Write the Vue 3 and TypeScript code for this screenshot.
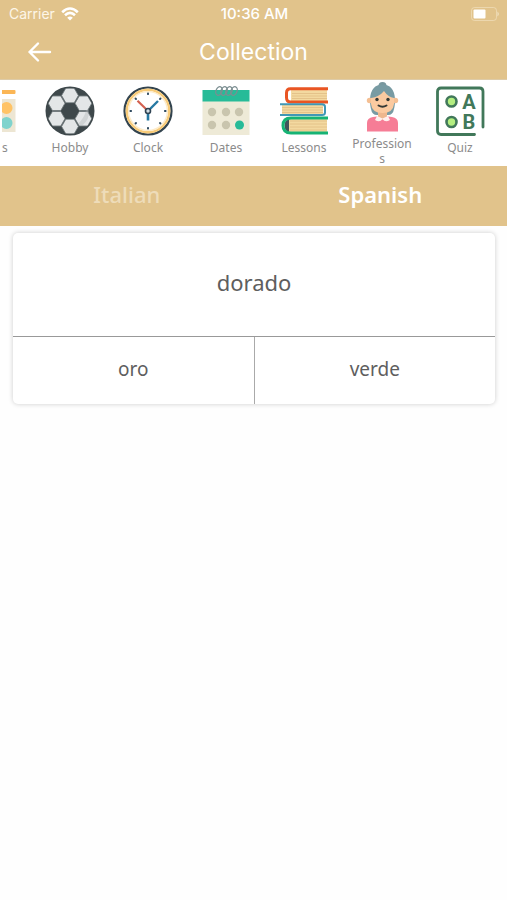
<script setup lang="ts">
import { ref } from 'vue'

interface Category {
  id: string
  label: string
}

const categories: Category[] = [
  { id: 'hobby', label: 'Hobby' },
  { id: 'clock', label: 'Clock' },
  { id: 'dates', label: 'Dates' },
  { id: 'lessons', label: 'Lessons' },
  { id: 'professions', label: 'Professions' },
  { id: 'quiz', label: 'Quiz' },
]

const languages: string[] = ['Italian', 'Spanish']
const activeLanguage = ref<string>('Spanish')

const word = 'dorado'
const answers: string[] = ['oro', 'verde']

const panels = [0, 60, 120, 180, 240, 300]
const hours = [0, 45, 90, 135, 180, 225, 270, 315]
const dots = [
  [11, 26], [25, 26], [38, 26],
  [11, 39], [25, 39],
]
</script>

<template>
  <div class="screen">
    <header class="top">
      <div class="status">
        <div class="carrier">
          <span>Carrier</span>
          <svg width="18" height="14" viewBox="0 0 18 14" fill="none" stroke="#fff" stroke-width="2.6">
            <path d="M1.2 5.2Q9-2.2 16.8 5.2" />
            <path d="M4 8.2Q9 3.6 14 8.2" />
            <path d="M9 13.6L6.2 10.8Q9 8.4 11.8 10.8Z" fill="#fff" stroke="none" />
          </svg>
        </div>
        <span class="time">10:36 AM</span>
        <svg class="battery" width="30" height="14" viewBox="0 0 30 14">
          <rect x="1.5" y=".5" width="25" height="13" rx="3" fill="none" stroke="#f3e4c6" stroke-opacity=".6" />
          <rect x="3.5" y="2.5" width="12" height="9" rx="1" fill="#fff" />
          <path d="M27.5 4.5Q30 7 27.5 9.5Z" fill="#f3e4c6" />
        </svg>
      </div>
      <div class="nav">
        <button class="back" type="button" aria-label="Back">
          <svg width="26" height="22" viewBox="0 0 26 22" fill="none" stroke="#fff" stroke-width="2.4" stroke-linecap="round" stroke-linejoin="round">
            <path d="M24 11H3.5M12 2.5L3.5 11L12 19.5" />
          </svg>
        </button>
        <h1>Collection</h1>
      </div>
    </header>

    <nav class="strip">
      <a class="item partial" href="#">
        <svg width="14" height="50" viewBox="0 0 14 50">
          <rect x="-4" y="4" width="17.5" height="4" rx="1" fill="#fbb655" />
          <rect x="-4" y="13" width="17.5" height="33" fill="#ede6d3" />
          <circle cx="4.5" cy="22" r="6" fill="#ffc366" />
          <circle cx="4.5" cy="37" r="6" fill="#80d3cd" />
        </svg>
        <span class="label">s</span>
      </a>
      <a v-for="c in categories" :key="c.id" class="item" href="#">
        <svg v-if="c.id === 'hobby'" width="50" height="50" viewBox="0 0 50 50">
          <defs>
            <clipPath id="ball"><circle cx="25" cy="25" r="23" /></clipPath>
          </defs>
          <circle cx="25" cy="25" r="24.5" fill="#3e484b" />
          <g clip-path="url(#ball)">
            <path
              v-for="a in panels"
              :key="a"
              d="M20.8 2.2H29.2L33.4 9.5L29.2 16.8H20.8L16.6 9.5Z"
              :transform="`rotate(${a} 25 25)`"
              fill="#e3e6e7"
              stroke="#6f787b"
              stroke-width=".8"
            />
            <path d="M44 24Q45 33 37 40L33 38Q40 31 41 24Z" fill="#a9b0b2" opacity=".35" />
          </g>
          <path d="M20.8 17.5H29.2L33.4 25L29.2 32.5H20.8L16.6 25Z" fill="#3e484b" />
        </svg>

        <svg v-else-if="c.id === 'clock'" width="50" height="50" viewBox="0 0 50 50">
          <circle cx="25" cy="25" r="23.5" fill="#fff" stroke="#33444f" stroke-width="2.2" />
          <circle cx="25" cy="25" r="21.2" fill="#fff" stroke="#f8cb78" stroke-width="2.4" />
          <circle cx="25" cy="25" r="19.4" fill="none" stroke="#fdebc9" stroke-width="1.4" />
          <g v-for="h in hours" :key="h" :transform="`rotate(${h} 25 25)`">
            <rect x="24" y="6.5" width="2" height="2.5" rx=".8" fill="#2f4a5f" />
          </g>
          <path d="M24 24L14.5 14.8" stroke="#d3604f" stroke-width="2.2" />
          <path d="M26 24L35 15" stroke="#2679a3" stroke-width="2.4" />
          <path d="M25 26V34.5" stroke="#2679a3" stroke-width="2.6" />
          <circle cx="25" cy="25" r="2.5" fill="#d5dfe4" stroke="#2f4352" stroke-width="1.6" />
        </svg>

        <svg v-else-if="c.id === 'dates'" width="50" height="50" viewBox="0 0 50 50">
          <rect x="1.5" y="15" width="47" height="34" fill="#eeead7" />
          <rect x="1.5" y="4" width="47" height="11.500" fill="#27bb98" />
          <g fill="none" stroke="#7b8e91" stroke-width="1.3">
            <ellipse v-for="x in [18, 23, 28, 33]" :key="x" :cx="x" cy="5" rx="3" ry="4.5" :transform="`rotate(22 ${x} 5)`" />
          </g>
          <circle v-for="(d, i) in dots" :key="i" :cx="d[0]" :cy="d[1]" r="4.2" fill="#c9c5ae" />
          <circle cx="38.5" cy="39" r="4.5" fill="#27bb98" />
        </svg>

        <svg v-else-if="c.id === 'lessons'" width="50" height="50" viewBox="0 0 50 50">
          <path d="M12 4H48V15H12Z" fill="#f3d9a0" />
          <path d="M13 7.5H48M13 10H48M13 12.5H48" stroke="#dfbd83" stroke-width=".8" />
          <path d="M49 2.7H11.5Q7.5 2.7 7.5 7V11.5Q7.5 16 11.5 16H49" fill="none" stroke="#e95523" stroke-width="3" />
          <path d="M3 19H44V28.5H3Z" fill="#f3d9a0" />
          <path d="M3 21.5H44M3 24H44M3 26.5H44" stroke="#dfbd83" stroke-width=".8" />
          <path d="M1 18.3H43Q46 18.3 46 21V26.5Q46 29 43 29H1" fill="none" stroke="#4197b5" stroke-width="2" />
          <path d="M10 32H48V46H10Z" fill="#f3d9a0" />
          <path d="M11 35H48M11 38H48M11 41H48M11 44H48" stroke="#dfbd83" stroke-width=".8" />
          <path d="M10 33Q5.5 34 5.5 39.5Q5.5 45 10 46Z" fill="#41545b" />
          <path d="M49 32H12Q4 32 4 39.5Q4 47 12 47H49" fill="none" stroke="#16b374" stroke-width="3" />
        </svg>

        <svg v-else-if="c.id === 'professions'" width="50" height="50" viewBox="0 0 50 50">
          <circle cx="25.5" cy="4" r="4" fill="#78979e" />
          <path d="M14 27Q13 24 13 17Q14 2.500 25.5 2.500Q37 2.500 38 17Q38 24 37 27Q36 33 31 33H20Q15 33 14 27Z" fill="#789ba3" />
          <path d="M21 29H30V36Q25.5 42 21 36Z" fill="#eeb78e" />
          <circle cx="12.500" cy="18.5" r="2.7" fill="#f4bf93" />
          <circle cx="38.500" cy="18.5" r="2.7" fill="#f4bf93" />
          <path d="M14 16Q22 15 27 9Q31 15 37 16V22Q36 31 25.5 31Q15 31 14 22Z" fill="#fbcaa0" />
          <circle cx="20" cy="17.5" r="1.7" fill="#343936" />
          <circle cx="31" cy="17.5" r="1.7" fill="#343936" />
          <path d="M21.500 23.5Q25.500 26 29.500 23.500" fill="none" stroke="#343936" stroke-width="2" stroke-linecap="round" />
          <path d="M10 49.500V41Q10 36 16 35L20 34.500L25.500 38L31 34.500L35 35Q41 36 41 41V49.500Z" fill="#f67d96" />
          <path d="M20 34L25.5 36.500L31 34L33 38Q28 41 25.5 37Q23 41 18 38Z" fill="#fff0ee" />
        </svg>

        <svg v-else width="50" height="50" viewBox="0 0 50 50">
          <path d="M39.500 48.500H6Q2.500 48.500 2.500 45V5.500Q2.500 2 6 2H44.500Q48 2 48 5.500V41" fill="none" stroke="#41785a" stroke-width="2.8" stroke-linecap="round" />
          <circle cx="16.5" cy="15.5" r="5" fill="#b3ee80" stroke="#41785a" stroke-width="2.6" />
          <circle cx="16.5" cy="36" r="5" fill="#b3ee80" stroke="#41785a" stroke-width="2.6" />
          <text x="34" y="22.5" class="letter">A</text>
          <text x="34" y="43" class="letter">B</text>
        </svg>
        <span class="label">{{ c.label }}</span>
      </a>
    </nav>

    <div class="tabs">
      <button
        v-for="l in languages"
        :key="l"
        type="button"
        :class="['tab', { active: l === activeLanguage }]"
        @click="activeLanguage = l"
      >
        {{ l }}
      </button>
    </div>

    <main class="card">
      <p class="word">{{ word }}</p>
      <div class="answers">
        <button v-for="a in answers" :key="a" type="button" class="answer">{{ a }}</button>
      </div>
    </main>
  </div>
</template>

<style>
body {
  background: #fefefe;
}
</style>

<style scoped>
.screen {
  font-family: "Noto Sans", sans-serif;
  color: #5e5e5e;
}
button {
  margin: 0;
  padding: 0;
  border: 0;
  background: none;
  font: inherit;
  color: inherit;
  cursor: pointer;
}
svg {
  display: block;
  flex: none;
}
.top {
  background: #e1c38b;
  color: #fff;
  font-family: Inter, sans-serif;
  border-bottom: 1px solid #ddcba8;
}
.status {
  display: grid;
  grid-template-columns: 1fr auto 1fr;
  align-items: center;
  height: 27px;
  padding: 0 7px 0 9px;
  font-size: 14px;
}
.carrier {
  display: flex;
  align-items: center;
  gap: 6px;
  color: #fdf6e8;
}
.time {
  font-size: 15px;
  font-weight: 500;
}
.battery {
  justify-self: end;
}
.nav {
  display: grid;
  grid-template-columns: 52px 1fr 52px;
  align-items: center;
  height: 50px;
  padding-bottom: 2px;
}
.back {
  justify-self: end;
}
h1 {
  margin: 0;
  text-align: center;
  font-size: 23px;
  font-weight: 400;
  line-height: 26px;
}
.strip {
  display: flex;
  height: 85px;
  padding: 1px 0 0 2px;
  overflow-x: clip;
  background: #fff;
}
.item {
  flex: none;
  box-sizing: border-box;
  width: 78px;
  padding: 0 8px;
  display: flex;
  flex-direction: column;
  align-items: center;
  justify-content: center;
  gap: 4px;
  text-decoration: none;
  color: #8b8b8b;
}
.partial {
  width: 29px;
  padding: 0;
  align-items: flex-start;
}
.label {
  max-width: 100%;
  min-height: 22px;
  font-size: 12px;
  line-height: 15px;
  text-align: center;
  word-break: break-all;
}
.letter {
  font: bold 20px Roboto, sans-serif;
  text-anchor: middle;
  fill: #41785a;
}
.tabs {
  display: flex;
  background: #e1c38b;
}
.tab {
  flex: 1;
  height: 60px;
  padding-bottom: 4px;
  font-size: 22px;
  font-weight: 500;
  color: #eedcb9;
}
.tab.active {
  font-weight: 600;
  color: #fff;
}
.card {
  margin: 7px 12px 7px 13px;
  border-radius: 5px;
  background: #fff;
  box-shadow: 0 0 5px rgba(0, 0, 0, 0.2);
  overflow: hidden;
}
.word {
  margin: 0;
  padding: 33px 0 38px;
  font-size: 22px;
  line-height: 32px;
  text-align: center;
}
.answers {
  display: flex;
  border-top: 1px solid #999;
}
.answer {
  flex: 1;
  height: 67px;
  padding-bottom: 4px;
  font-size: 19px;
}
.answer + .answer {
  border-left: 1px solid #aaa;
}
</style>
